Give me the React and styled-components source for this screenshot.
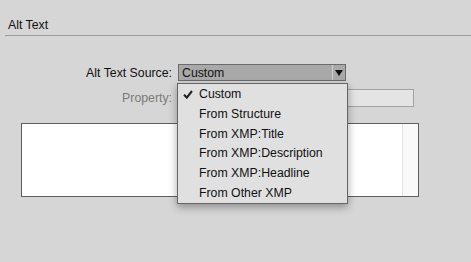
import React from 'react';
import styled, {createGlobalStyle} from 'styled-components';

const GlobalStyle = createGlobalStyle`
  html, body {
    margin: 0;
    padding: 0;
    background: #d6d6d6;
  }
  body {
    font-family: "Liberation Sans", Arial, sans-serif;
    font-size: 12.3px;
    color: #111;
  }
`;

const Panel = styled.div`
  position: relative;
  width: 471px;
  height: 262px;
  background: #d6d6d6;
  overflow: hidden;
`;

const Header = styled.div`
  margin-left: 5px;
  padding: 19px 0 4px 3px;
  border-bottom: 1px solid #9b9b9b;
  line-height: 12px;
`;

const Form = styled.div`
  display: grid;
  grid-template-columns: 172px 1fr;
  column-gap: 6px;
  row-gap: 8px;
  padding-top: 28px;
  align-items: center;
`;

const Label = styled.label`
  text-align: right;
  color: ${props => props.disabled ? '#7a7a7a' : '#111'};
`;

const Select = styled.div`
  box-sizing: border-box;
  width: 168px;
  height: 17px;
  display: flex;
  align-items: center;
  background: #a9a9a9;
  border: 1px solid #6c6c6c;
  padding-left: 3px;
`;

const SelectValue = styled.span`
  flex: 1;
  line-height: 15px;
  padding-top: 1px;
`;

const ArrowBox = styled.span`
  display: flex;
  align-items: center;
  justify-content: center;
  width: 12px;
  height: 15px;
  border-left: 1px solid #d0d0d0;
`;

const Field = styled.div`
  box-sizing: border-box;
  width: 236px;
  height: 18px;
  background: #e4e4e4;
  border: 1px solid #a3a3a3;
`;

const TextBox = styled.div`
  box-sizing: border-box;
  margin: 16px 0 0 21px;
  width: 398px;
  height: 74px;
  background: #fff;
  border: 1px solid #5e5e5e;
  display: flex;
  justify-content: flex-end;
`;

const ScrollTrack = styled.div`
  width: 15px;
  background: #f9f9f9;
  border-left: 1px solid #e4e4e4;
`;

const Menu = styled.ul`
  position: absolute;
  left: 177px;
  top: 83px;
  box-sizing: border-box;
  width: 171px;
  margin: 0;
  padding: 0;
  list-style: none;
  background: #e0e0e0;
  border: 1px solid #666;
  box-shadow: 0 3px 8px rgba(0, 0, 0, 0.35);
`;

const Item = styled.li`
  position: relative;
  height: 19.8px;
  line-height: 20px;
  padding-left: 21px;
  color: #111;
`;

const Check = styled.span`
  position: absolute;
  left: 5px;
  top: 1px;
`;

const items = ['Custom', 'From Structure', 'From XMP:Title', 'From XMP:Description', 'From XMP:Headline', 'From Other XMP'];

export default function App() {
  return (
    <Panel>
      <GlobalStyle />
      <Header>Alt Text</Header>
      <Form>
        <Label>Alt Text Source:</Label>
        <Select>
          <SelectValue>Custom</SelectValue>
          <ArrowBox>
            <svg width="8" height="6" viewBox="0 0 8 6">
              <path d="M0 0 H8 L4 6 Z" fill="#111" />
            </svg>
          </ArrowBox>
        </Select>
        <Label disabled>Property:</Label>
        <Field />
      </Form>
      <TextBox>
        <ScrollTrack />
      </TextBox>
      <Menu>
        {items.map((item, i) => (
          <Item key={item}>
            {i === 0 && (
              <Check>
                <svg width="10" height="9" viewBox="0 0 10 9">
                  <path d="M1 4.8 L3.8 7.6 L9 1" stroke="#222" strokeWidth="2.1" fill="none" />
                </svg>
              </Check>
            )}
            {item}
          </Item>
        ))}
      </Menu>
    </Panel>
  );
}
